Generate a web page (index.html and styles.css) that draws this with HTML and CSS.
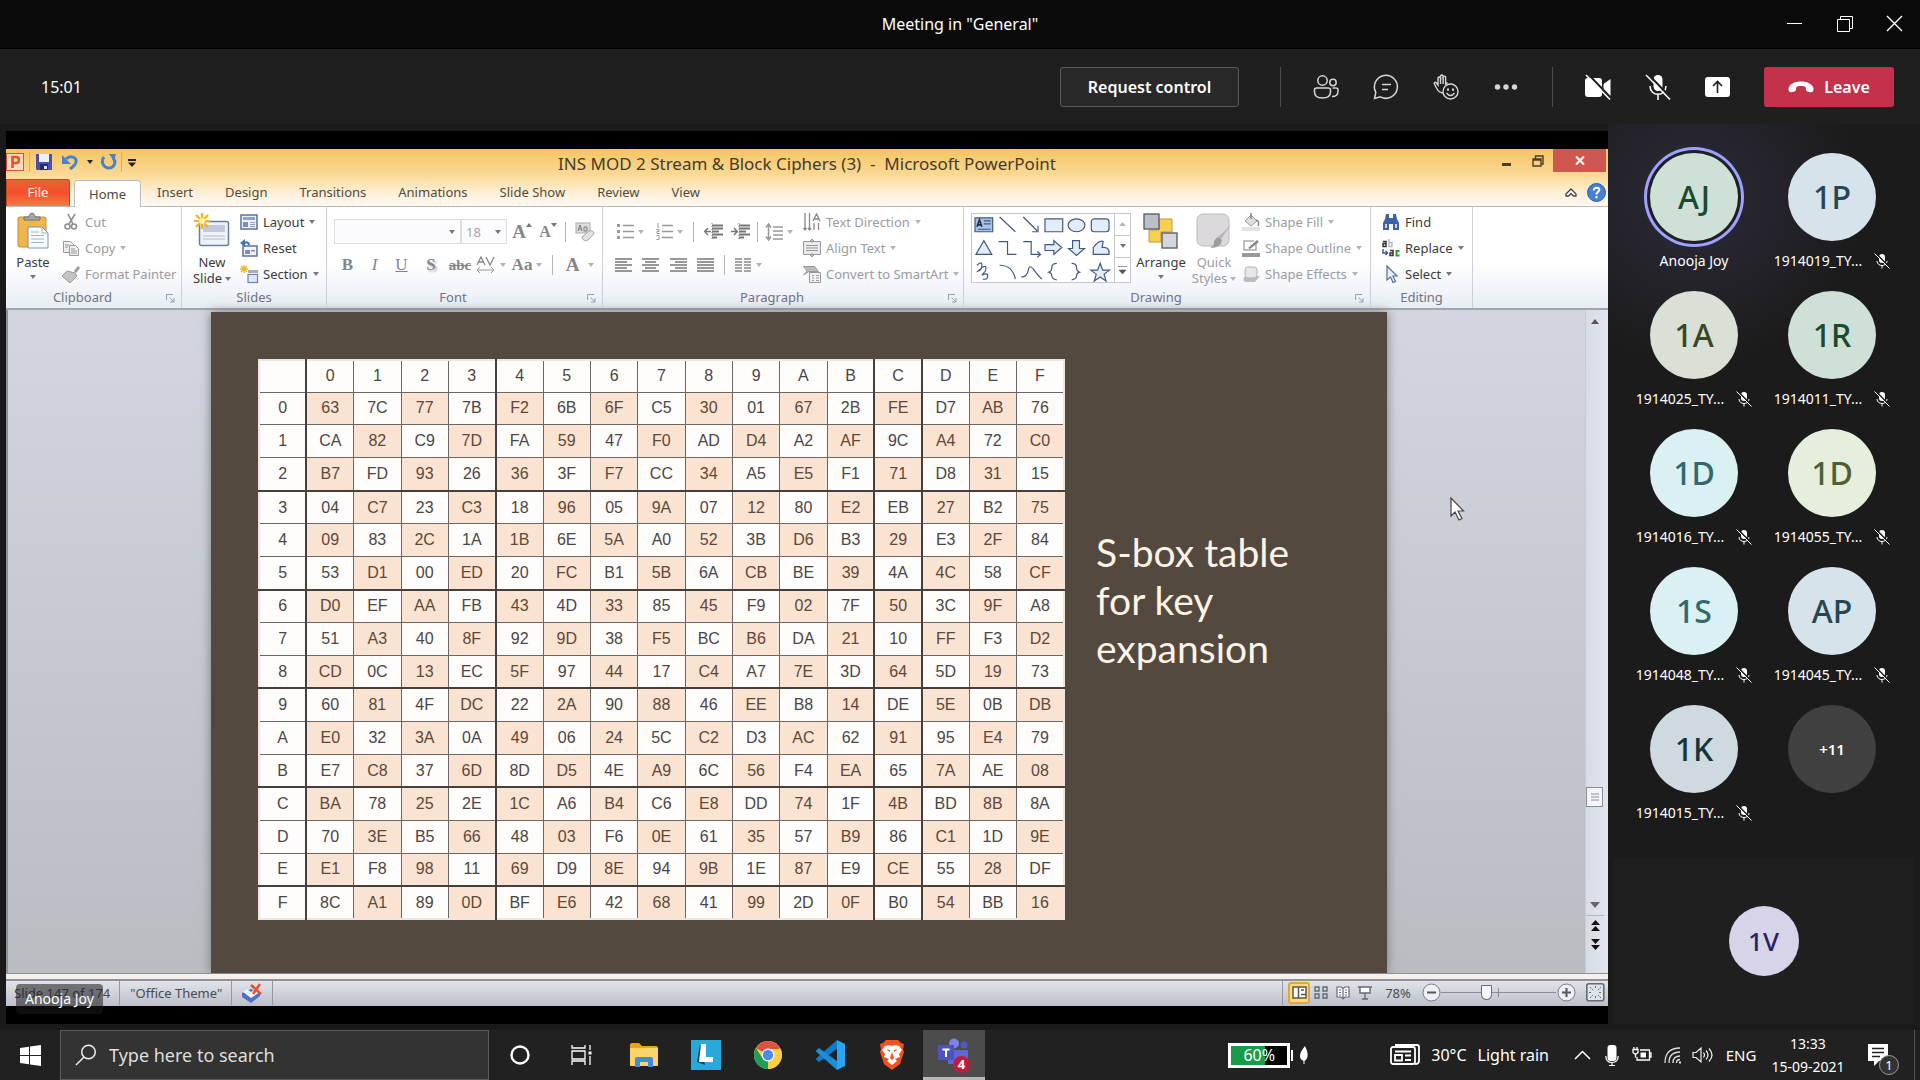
FILE: index.html
```html
<!DOCTYPE html>
<html lang="en">
<head>
<meta charset="utf-8">
<title>Meeting in "General"</title>
<link rel="stylesheet" href="styles.css">
</head>
<body>
<svg class="sprite" aria-hidden="true">
  <symbol id="mic-off" viewBox="0 0 16 16"><rect x="5" y="1" width="6" height="9" rx="3" fill="#fff"/><path d="M3 8c0 6 10 6 10 0M8 12.500v3" fill="none" stroke="#fff"/><path d="M2 .5l14 14" stroke="#1b1b1b" stroke-width="1.500"/><path d="M.5 .5l15 15" stroke="#fff"/></symbol>
  <symbol id="down" viewBox="0 0 6 4"><path d="M0 0h6L3 4z" fill="currentColor"/></symbol>
  <symbol id="launch" viewBox="0 0 9 9"><path d="M.5 6V.5H7M3.500 3.500l4 4M8 4v4H4" fill="none" stroke="#9a9da5"/></symbol>
</svg>

<header class="titlebar">
  <span></span>
  <h1>Meeting in "General"</h1>
  <div class="window-buttons">
    <button aria-label="Minimize"><svg width="18" height="18"><path d="M1 8.500h15" stroke="#fff"/></svg></button>
    <button aria-label="Restore"><svg width="18" height="18" fill="none" stroke="#fff"><path d="M1.500 4.500h12v12h-12zM4.500 4.500v-3h12v12h-3"/></svg></button>
    <button aria-label="Close"><svg width="18" height="18"><path d="M1 1l15 15M16 1L1 16" stroke="#fff" stroke-width="1.400"/></svg></button>
  </div>
</header>

<div class="callbar">
  <time class="elapsed">15:01</time>
  <button class="request">Request control</button>
  <div class="call-group">
    <button aria-label="People"><svg width="26" height="26" fill="none" stroke="#d6d6d6" stroke-width="1.500"><circle cx="9.500" cy="6.500" r="4.700"/><circle cx="20" cy="8.500" r="3.200"/><path d="M3.500 14h12q2 0 2 2v2q0 6-8 6t-8-6v-2q0-2 2-2zM19.500 14h3.500q2 0 2 2v1.500q0 5-6 5"/></svg></button>
    <button aria-label="Chat"><svg width="26" height="26" fill="none" stroke="#d6d6d6" stroke-width="1.500"><path d="M1.500 24.500l1.300-6.200a11.500 11.500 0 1 1 4.600 4.600z"/><path d="M9 10.500h9M9 15.500h6"/></svg></button>
    <button aria-label="Reactions"><svg width="26" height="26" fill="none" stroke="#d6d6d6" stroke-width="1.400"><path d="M10 19c-3 0-5-2-6.500-5L1.300 9.800c-.5-1.500 1.300-2 2-.8L5 11V4q1.300-2 2.500 0V2q1.300-2 2.600 0v1q1.300-1.700 2.500 0v7l2-1.500" /><path d="M7.500 4v6M10.100 3v7"/><circle cx="17.500" cy="17.500" r="7.500"/><path d="M13.500 19q4 5 8 0"/><path d="M15 14.500v2.200M20 14.500v2.200" stroke-width="2"/></svg></button>
    <button aria-label="More"><svg width="24" height="24" fill="#d6d6d6"><circle cx="3.500" cy="12" r="2.700"/><circle cx="12" cy="12" r="2.700"/><circle cx="20.500" cy="12" r="2.700"/></svg></button>
  </div>
  <div class="call-group">
    <button aria-label="Turn camera on"><svg width="26" height="26"><rect x="0" y="4" width="17" height="19" rx="3" fill="#fff"/><path d="M18.500 10l7-5v17l-7-5z" fill="#fff"/><path d="M3 0l24 25" stroke="#1f1f1f" stroke-width="2"/><path d="M1 1l24 24.500" stroke="#fff" stroke-width="1.500"/></svg></button>
    <button aria-label="Unmute"><svg width="26" height="26"><rect x="8.500" y="1" width="9" height="16" rx="4.500" fill="#fff"/><path d="M5 12c0 11 16 11 16 0M13 20v6" fill="none" stroke="#fff" stroke-width="1.500"/><path d="M3 0l24 25" stroke="#1f1f1f" stroke-width="2"/><path d="M1 1l24 24.500" stroke="#fff" stroke-width="1.500"/></svg></button>
    <button aria-label="Share content"><svg width="26" height="26"><rect x="0" y="3" width="25" height="20" rx="3" fill="#fff"/><path d="M12.500 19V8M8 12l4.500-4.500L17 12" fill="none" stroke="#1f1f1f" stroke-width="1.600"/></svg></button>
  </div>
  <button class="leave"><svg width="26" height="12"><path d="M.5 8C1-2 25-2 25.500 8c0 3-1.500 3.500-3 3.200l-3-.7c-2-.5-1.300-3.500-2-4.500-2-1.200-7-1.200-9 0-.7 1 0 4-2 4.500l-3 .7C2 11.500.5 11 .5 8z" fill="#fff"/></svg>Leave</button>
</div>

<main class="meeting">
  <section class="stage" aria-label="Shared screen">
    <div class="ppt">
      <div class="ppt-head">
        <div class="ppt-title">
          <div class="qat">
            <svg width="18" height="18"><rect x=".5" y=".5" width="17" height="17" fill="#fbd9c8" stroke="#d9532c"/><path d="M6.500 15V4h3.500q3 0 3 3t-3 3H6.500" fill="none" stroke="#dc5a1c" stroke-width="2.600"/></svg>
            <i class="vline"></i>
            <button aria-label="Save"><svg width="18" height="18"><path d="M1 1h16v16H2l-1-1z" fill="#4a4fb0"/><path d="M4 1h10v8H4z" fill="#eef1fb"/><path d="M5 11h8v6H5z" fill="#262c6b"/><path d="M9 13h3v3H9z" fill="#dfe3f5"/></svg></button>
            <button aria-label="Undo"><svg width="18" height="18"><path d="M5 6c4-4 11-2 10 3-.5 3-3 5-6 7" fill="none" stroke="#4b80cc" stroke-width="3"/><path d="M1 2v9h9z" fill="#4b80cc"/></svg></button>
            <svg class="arrow dark"><use href="#down"/></svg>
            <button class="redo" aria-label="Repeat"><svg width="15" height="16"><path d="M3 3c-4 5 0 11 5 11s8-6 4-10" fill="none" stroke="#4b80cc" stroke-width="3"/><path d="M8 0h7l-2 7z" fill="#4b80cc"/></svg></button>
            <i class="vline"></i>
            <button aria-label="Customize toolbar"><svg width="10" height="9"><path d="M1 1h8v2H1zM1 4.500h8L5 9z" fill="#222"/></svg></button>
          </div>
          <h2>INS MOD 2 Stream &amp; Block Ciphers (3) &nbsp;- &nbsp;Microsoft PowerPoint</h2>
          <div class="ppt-controls">
            <button aria-label="Minimize"><svg width="12" height="12"><path d="M1 9.500h9" stroke="#4c3f25" stroke-width="3"/></svg></button>
            <button aria-label="Restore"><svg width="12" height="12" fill="none" stroke="#4c3f25" stroke-width="1.400"><path d="M1 4h8v7H1zM1 5h8M3.500 4V1H11v8H9"/></svg></button>
            <button class="ppt-close" aria-label="Close"><svg width="10" height="9"><path d="M1 .5l8 8M9 .5l-8 8" stroke="#fff" stroke-width="2"/></svg></button>
          </div>
        </div>
        <nav class="tabs">
          <button class="tab file">File</button><button class="tab on">Home</button><button class="tab">Insert</button><button class="tab">Design</button><button class="tab">Transitions</button><button class="tab">Animations</button><button class="tab">Slide Show</button><button class="tab">Review</button><button class="tab">View</button>
          <span class="tabs-end">
            <button aria-label="Collapse ribbon"><svg width="12" height="10" fill="#fff" stroke="#444" stroke-width="1.300"><path d="M1 6l5-5 5 5v2H8.500L6 5.500 3.500 8H1z"/></svg></button>
            <button aria-label="Help"><svg width="19" height="19"><circle cx="9.500" cy="9.500" r="9" fill="#4580d2" stroke="#2c5fae"/><path d="M6.800 7.500c0-4 6-3.500 5.500-.3-.3 1.800-2.800 1.800-2.800 4.300M9.500 13v2.200" fill="none" stroke="#fff" stroke-width="2"/></svg></button>
          </span>
        </nav>
      </div>

      <div class="ribbon">
        <section class="group clipboard">
          <div class="body">
            <button class="big paste"><svg width="32" height="36"><rect x="1" y="4" width="28" height="30" rx="2" fill="#f0b64e" stroke="#c48f33"/><path d="M7 7V4h5c0-5 6-5 6 0h5v3z" fill="#a6a8ab" stroke="#6e7073"/><path d="M11 14h14l6 6v15H11z" fill="#f8faff" stroke="#7f8fb0"/><path d="M25 14v6h6M14 19h8M14 22.500h13M14 26h13M14 29.500h13" fill="none" stroke="#a8b2c6"/></svg><span>Paste</span><svg class="arrow"><use href="#down"/></svg></button>
            <div class="stack off">
              <button><svg width="18" height="18" fill="none" stroke="#8d8d92" stroke-width="1.600"><path d="M6 1l5 10M13 1L7 11"/><circle cx="5.500" cy="13.500" r="2.500"/><circle cx="12" cy="13.500" r="2.500"/></svg>Cut</button>
              <button><svg width="18" height="18" fill="#eee" stroke="#999"><path d="M1.500 2.500h7l3 3v8h-10z"/><path d="M7.500 6.500h6l3 3v7h-9z"/><path d="M9 10h4M9 12h6M9 14h6M3 6h4M3 8h3"/></svg>Copy<svg class="arrow"><use href="#down"/></svg></button>
              <button><svg width="18" height="18"><path d="M12 6l4-5 2 2-4 5z" fill="#999"/><path d="M5 6l8 2 2 3-7 7-8-7z" fill="#c6c3c3" stroke="#999"/></svg>Format Painter</button>
            </div>
          </div>
          <h3>Clipboard</h3><svg class="launch"><use href="#launch"/></svg>
        </section>
        <section class="group slides">
          <div class="body">
            <button class="big"><svg width="36" height="36"><rect x="5.500" y="8.500" width="29" height="24" rx="2" fill="#eef2fa" stroke="#6a7d9e" stroke-width="1.500"/><path d="M9 12h22v7H9z" fill="#c4c9d9"/><path d="M9 23h22M9 26h22" stroke="#b5bccd"/><path d="M8 0v16M0 8h16M2 2l12 12M14 2L2 14" stroke="#f2b522" stroke-width="2.200"/><circle cx="8" cy="8" r="3" fill="#fff2a8"/></svg><span>New</span><span>Slide <svg class="arrow"><use href="#down"/></svg></span></button>
            <div class="stack">
              <button><svg width="18" height="18"><rect x="1" y="2" width="16" height="14" fill="#eef3fb" stroke="#5b7199" stroke-width="1.500"/><path d="M3 4h12v3H3z" fill="#8aa3cc"/><path d="M3 9h5v5H3z" fill="#7b8fb5"/><path d="M10 9.500h5M10 11.500h5M10 13.500h5" stroke="#8da0c0"/></svg>Layout<svg class="arrow"><use href="#down"/></svg></button>
              <button><svg width="18" height="18"><rect x="3" y="7" width="14" height="10" fill="#eef3fb" stroke="#5b7199" stroke-width="1.500"/><path d="M5 11h5v4H5zM11 11h4v1.500h-4z" fill="#7b8fb5"/><path d="M9 6c0-3-3-3-5-2" fill="none" stroke="#3f74c4" stroke-width="2.200"/><path d="M0 4l5-4v8z" fill="#3f74c4"/></svg>Reset</button>
              <button><svg width="18" height="18"><path d="M8 5h10v3H8z" fill="#a9acb3"/><rect x="8" y="9.500" width="9.500" height="8" fill="#dfe8f7" stroke="#6f84aa" stroke-width="1.200"/><path d="M4 0v8M0 4h8M1 1l6 6M7 1L1 7" stroke="#f2b522" stroke-width="1.300"/></svg>Section<svg class="arrow"><use href="#down"/></svg></button>
            </div>
          </div>
          <h3>Slides</h3>
        </section>
        <section class="group font">
          <div class="body rows off">
            <div class="font-row1">
              <select aria-label="Font"><option></option></select>
              <select aria-label="Font size"><option>18</option></select>
              <button class="serif grow" aria-label="Grow font">A<svg width="6" height="5"><path d="M3 0l3 4H0z" fill="#777"/></svg></button>
              <button class="serif shrink" aria-label="Shrink font">A<svg width="6" height="5"><path d="M0 0h6L3 4z" fill="#777"/></svg></button>
              <i class="vline"></i>
              <button aria-label="Clear formatting"><svg width="20" height="20"><rect x="1" y="1" width="14" height="10" fill="#ddd" stroke="#aaa"/><path d="M3 9l2-6 2 6M4 7h2M9 9V5h3v4z" fill="none" stroke="#777"/><path d="M7 15l7-6q5-1 5 3l-6 6q-5 2-6-3z" fill="#e4dfe0" stroke="#a9a6a8"/></svg></button>
            </div>
            <div class="font-row2">
              <button class="serif"><b>B</b></button><button class="serif"><em>I</em></button><button class="serif"><u>U</u></button><button class="serif shadow"><b>S</b></button><button class="serif"><s>abc</s></button>
              <button class="av" aria-label="Character spacing"><svg width="20" height="18"><path d="M1 9l4-8 4 8M3 6h4M10 1l4 8 4-8" fill="none" stroke="#888" stroke-width="1.300"/><path d="M1 14h17M4 11l-3 3 3 3M15 11l3 3-3 3" fill="none" stroke="#999"/></svg><svg class="arrow"><use href="#down"/></svg></button>
              <button class="serif"><b>Aa</b><svg class="arrow"><use href="#down"/></svg></button><i class="vline"></i><button class="serif color"><b>A</b><svg class="arrow"><use href="#down"/></svg></button>
            </div>
          </div>
          <h3>Font</h3><svg class="launch"><use href="#launch"/></svg>
        </section>
        <section class="group paragraph">
          <div class="body">
            <div class="rows off">
              <div class="para-row1">
                <button aria-label="Bullets"><svg width="17" height="17" stroke="#999" stroke-width="1.500"><path d="M6 2.500h11M6 8.500h11M6 14.500h11"/><path d="M0 2.500h3M0 8.500h3M0 14.500h3" stroke-width="3"/></svg><svg class="arrow"><use href="#down"/></svg></button>
                <button aria-label="Numbering"><svg width="17" height="17" fill="none" stroke="#999" stroke-width="1.500"><path d="M6 2.500h11M6 8.500h11M6 14.500h11"/><path d="M2 0v5M.5 6.500h2.500v2H1v2h2.500M.5 12.500h2.500v4H.5" stroke-width="1"/></svg><svg class="arrow"><use href="#down"/></svg></button>
                <i class="vline"></i>
                <button aria-label="Decrease indent"><svg width="19" height="17" stroke="#777" stroke-width="2"><path d="M8 2.500h11M8 5.500h11M8 8.500h7M8 11.500h11M8 14.500h5"/><path d="M0 8.500h7M4 5L.8 8.500 4 12" fill="none" stroke-width="1.500"/><path d="M8 0v17" stroke-dasharray="1 2" stroke-width="1"/></svg></button>
                <button aria-label="Increase indent"><svg width="19" height="17" stroke="#777" stroke-width="2"><path d="M8 2.500h11M8 5.500h11M8 8.500h7M8 11.500h11M8 14.500h5"/><path d="M0 8.500h7M3 5l3.200 3.500L3 12" fill="none" stroke-width="1.500"/><path d="M8 0v17" stroke-dasharray="1 2" stroke-width="1"/></svg></button>
                <i class="vline"></i>
                <button aria-label="Line spacing"><svg width="18" height="18" stroke="#999" stroke-width="1.500"><path d="M8 4h10M8 8h10M8 12h10M8 16h10M3.500 2v14M1 4.500L3.500 1 6 4.500M1 13.500L3.500 17 6 13.500" fill="none"/></svg><svg class="arrow"><use href="#down"/></svg></button>
              </div>
              <div class="para-row2">
                <button aria-label="Align left"><svg width="17" height="14" stroke="#777" stroke-width="1.600"><path d="M0 1h17M0 4h12M0 7h17M0 10h12M0 13h17"/></svg></button>
                <button aria-label="Center"><svg width="17" height="14" stroke="#777" stroke-width="1.600"><path d="M0 1h17M3 4h11M0 7h17M3 10h11M0 13h17"/></svg></button>
                <button aria-label="Align right"><svg width="17" height="14" stroke="#777" stroke-width="1.600"><path d="M0 1h17M5 4h12M0 7h17M5 10h12M0 13h17"/></svg></button>
                <button aria-label="Justify"><svg width="17" height="14" stroke="#777" stroke-width="1.600"><path d="M0 1h17M0 4h17M0 7h17M0 10h17M0 13h17"/></svg></button>
                <i class="vline"></i>
                <button aria-label="Columns"><svg width="17" height="14" stroke="#888" stroke-width="1.600"><path d="M0 1h7M9 1h7M0 4h7M9 4h7M0 7h7M9 7h7M0 10h7M9 10h7M0 13h7M9 13h7"/></svg><svg class="arrow"><use href="#down"/></svg></button>
              </div>
            </div>
            <div class="stack off">
              <button><svg width="18" height="18" fill="none" stroke="#888" stroke-width="1.300"><path d="M2 0v17M6.500 0v17M11 10v7M15.500 10v7M10 8l3.500-7L17 8M11 6h5M.5 15L2 17l1.500-2M5 15l1.500 2L8 15"/></svg>Text Direction<svg class="arrow"><use href="#down"/></svg></button>
              <button><svg width="18" height="18" fill="#eceaec" stroke="#999"><path d="M.5 2.500h17v13H.5z"/><path d="M3 6.500h12M3 9h12M3 11.500h12M9 0v4M7 2l2-2 2 2M9 14v4M7 16l2 2 2-2"/></svg>Align Text<svg class="arrow"><use href="#down"/></svg></button>
              <button><svg width="18" height="18" stroke="#999"><path d="M.5 1.500h11l4 5H6L.5 10 4 6z" fill="#bbb"/><path d="M6.500 7.500h11v10h-11z" fill="#f2f0f2"/><path d="M9 10.500h2M13 10.500h3M9 13h2M13 13h3M9 15.500h2M13 15.500h3"/></svg>Convert to SmartArt<svg class="arrow"><use href="#down"/></svg></button>
            </div>
          </div>
          <h3>Paragraph</h3><svg class="launch"><use href="#launch"/></svg>
        </section>
        <section class="group drawing">
          <div class="body">
            <div class="gallery">
              <svg viewBox="0 0 144 70" fill="#e3edf8" stroke="#41597f" stroke-width="1.200">
                <path d="M3 4h18v14H3z" fill="#a9c2e6"/><path d="M5 13l2.500-7 2.500 7M6 11h3" fill="none" stroke="#1e2c47" stroke-width="1.600"/><path d="M12 7h7M12 10h7M6 15.500h13" fill="none"/>
                <path d="M28 3l16 15M52 3l14 14M67 12v6h-6" fill="none"/>
                <path d="M74 5h18v13H74z"/><ellipse cx="106" cy="11.500" rx="8.500" ry="6.500"/><rect x="121" y="5" width="18" height="13" rx="3"/>
                <path d="M12 27l8 14H4z"/><path d="M27 28h9v13h9M52 28h8v13h9M66 38l3.500 3L66 44" fill="none"/>
                <path d="M74 31h9v-4l8 7-8 7v-4h-9zM102 27h7v8h5l-8 7-8-7h4z"/><path d="M123 41v-7q6-8 10-6l-1 6q8-1 7 7z"/>
                <path d="M5 52q5-5 5 0t-4 6q7-7 8-4t-4 8q6-3 6 1t-5 3" fill="none"/>
                <path d="M28 52q13 0 16 14M50 64q6 0 7-7t6 0 8 9" fill="none"/>
                <path d="M86 50q-5 0-5 4t-3 5q3 1 3 4t5 4M101 50q5 0 5 4t3 5q-3 1-3 4t-5 4" fill="none"/>
                <path d="M130 50l2.500 7h7l-5.500 4 2 7-6-4-6 4 2-7-5.500-4h7z"/>
              </svg>
              <div class="gallery-scroll"><button aria-label="Row up"><svg width="7" height="5"><path d="M3.500 0L7 4H0z" fill="#b9b9bd"/></svg></button><button aria-label="Row down"><svg class="arrow"><use href="#down"/></svg></button><button aria-label="More shapes"><svg width="9" height="8"><path d="M0 .5h9M1 4h7L4.500 8z" fill="#555" stroke="#555" stroke-width=".6"/></svg></button></div>
            </div>
            <button class="big arrange"><svg width="36" height="36"><path d="M6.500 18h22M17 5.500h12v18H6.500v10H24V16" fill="none"/><path d="M16 6h13v13H18v10H6V17h10z" fill="#f8cf55" stroke="#c29a34"/><rect x="1" y="1" width="15" height="15" fill="#bcc0c6" stroke="#5d6167" stroke-width="1.400"/><rect x="19" y="20" width="15" height="15" fill="#d3d6db" stroke="#5d6167" stroke-width="1.400"/></svg><span>Arrange</span><svg class="arrow"><use href="#down"/></svg></button>
            <button class="big quick off"><svg width="36" height="36"><rect x="1" y="1" width="32" height="32" rx="6" fill="#dcd8dc" stroke="#bbb7bb"/><path d="M35 12L25 26l-3-2z" fill="#b5b5b5"/><path d="M22 24l4 3q-1 8-12 8 5-3 4-7 2-3 4-4z" fill="#9d9d9f"/></svg><span>Quick</span><span>Styles <svg class="arrow"><use href="#down"/></svg></span></button>
            <div class="stack off">
              <button><svg width="18" height="18"><path d="M3 8l6-6 6 6-6 5z" fill="#ddd" stroke="#999"/><path d="M9 6V0M14 7q4 1 2 6" fill="none" stroke="#888" stroke-width="1.500"/><path d="M0 14h18v4H0z" fill="#e3e3e3"/></svg>Shape Fill<svg class="arrow"><use href="#down"/></svg></button>
              <button><svg width="18" height="18"><path d="M14 4v7H2V2h10" fill="none" stroke="#aaa" stroke-width="1.500"/><path d="M6 9l9-8 2 2-9 7z" fill="#888"/><path d="M0 14h18v4H0z" fill="#999"/></svg>Shape Outline<svg class="arrow"><use href="#down"/></svg></button>
              <button><svg width="18" height="18"><path d="M2 12q-2 5 3 5h8l5-6z" fill="#bdbdbf"/><rect x="3" y="2" width="12" height="11" rx="3" fill="#e8e5e8" stroke="#b5b2b5"/></svg>Shape Effects<svg class="arrow"><use href="#down"/></svg></button>
            </div>
          </div>
          <h3>Drawing</h3><svg class="launch"><use href="#launch"/></svg>
        </section>
        <section class="group editing">
          <div class="body">
            <div class="stack">
              <button><svg width="18" height="18" fill="#3e62a8"><path d="M4 1h3v4h4V1h3l1 5 2 4v7h-6v-6H7v6H1v-7l2-4z"/><path d="M3 11h2v4H3zM13 11h2v4h-2z" fill="#c5d5f2"/></svg>Find</button>
              <button><svg width="18" height="18" fill="none" stroke-width="1.500"><path d="M1 2.500h3v5H1v-3h3" stroke="#333"/><path d="M7 0v7.500h3v-4H7" stroke="#bbb"/><path d="M1 10v4h4M3.500 12l2 2-2 2" stroke="#3c5c9a"/><path d="M8 11.500h3v5H8v-2.500h3" stroke="#333"/><path d="M17.500 12h-3v4.500h3" stroke="#2f9a3a" stroke-width="2"/></svg>Replace<svg class="arrow"><use href="#down"/></svg></button>
              <button><svg width="18" height="18"><path d="M5 1v14l3.500-3 2.500 5.500 2.500-1-2.500-5.500h4z" fill="#e6eefb" stroke="#566f9b" stroke-width="1.200"/></svg>Select<svg class="arrow"><use href="#down"/></svg></button>
            </div>
          </div>
          <h3>Editing</h3>
        </section>
      </div>

      <div class="workspace">
        <article class="slide">
          <table class="sbox">
            <thead><tr><td><th>0<th>1<th>2<th>3<th>4<th>5<th>6<th>7<th>8<th>9<th>A<th>B<th>C<th>D<th>E<th>F</thead>
            <tbody>
            <tr><th>0<td>63<td>7C<td>77<td>7B<td>F2<td>6B<td>6F<td>C5<td>30<td>01<td>67<td>2B<td>FE<td>D7<td>AB<td>76
            <tr><th>1<td>CA<td>82<td>C9<td>7D<td>FA<td>59<td>47<td>F0<td>AD<td>D4<td>A2<td>AF<td>9C<td>A4<td>72<td>C0
            <tr><th>2<td>B7<td>FD<td>93<td>26<td>36<td>3F<td>F7<td>CC<td>34<td>A5<td>E5<td>F1<td>71<td>D8<td>31<td>15
            <tr><th>3<td>04<td>C7<td>23<td>C3<td>18<td>96<td>05<td>9A<td>07<td>12<td>80<td>E2<td>EB<td>27<td>B2<td>75
            <tr><th>4<td>09<td>83<td>2C<td>1A<td>1B<td>6E<td>5A<td>A0<td>52<td>3B<td>D6<td>B3<td>29<td>E3<td>2F<td>84
            <tr><th>5<td>53<td>D1<td>00<td>ED<td>20<td>FC<td>B1<td>5B<td>6A<td>CB<td>BE<td>39<td>4A<td>4C<td>58<td>CF
            <tr><th>6<td>D0<td>EF<td>AA<td>FB<td>43<td>4D<td>33<td>85<td>45<td>F9<td>02<td>7F<td>50<td>3C<td>9F<td>A8
            <tr><th>7<td>51<td>A3<td>40<td>8F<td>92<td>9D<td>38<td>F5<td>BC<td>B6<td>DA<td>21<td>10<td>FF<td>F3<td>D2
            <tr><th>8<td>CD<td>0C<td>13<td>EC<td>5F<td>97<td>44<td>17<td>C4<td>A7<td>7E<td>3D<td>64<td>5D<td>19<td>73
            <tr><th>9<td>60<td>81<td>4F<td>DC<td>22<td>2A<td>90<td>88<td>46<td>EE<td>B8<td>14<td>DE<td>5E<td>0B<td>DB
            <tr><th>A<td>E0<td>32<td>3A<td>0A<td>49<td>06<td>24<td>5C<td>C2<td>D3<td>AC<td>62<td>91<td>95<td>E4<td>79
            <tr><th>B<td>E7<td>C8<td>37<td>6D<td>8D<td>D5<td>4E<td>A9<td>6C<td>56<td>F4<td>EA<td>65<td>7A<td>AE<td>08
            <tr><th>C<td>BA<td>78<td>25<td>2E<td>1C<td>A6<td>B4<td>C6<td>E8<td>DD<td>74<td>1F<td>4B<td>BD<td>8B<td>8A
            <tr><th>D<td>70<td>3E<td>B5<td>66<td>48<td>03<td>F6<td>0E<td>61<td>35<td>57<td>B9<td>86<td>C1<td>1D<td>9E
            <tr><th>E<td>E1<td>F8<td>98<td>11<td>69<td>D9<td>8E<td>94<td>9B<td>1E<td>87<td>E9<td>CE<td>55<td>28<td>DF
            <tr><th>F<td>8C<td>A1<td>89<td>0D<td>BF<td>E6<td>42<td>68<td>41<td>99<td>2D<td>0F<td>B0<td>54<td>BB<td>16
            </tbody>
          </table>
          <p class="slide-title">S-box table<br>for key<br>expansion</p>
        </article>
        <div class="scrollbar">
          <button aria-label="Scroll up"><svg width="8" height="5"><path d="M4 0l4 5H0z" fill="#555"/></svg></button>
          <span class="before"></span>
          <span class="thumb"><svg width="8" height="9"><path d="M0 1h8M0 4h8M0 7h8" stroke="#8a8d96"/></svg></span>
          <span class="after"></span>
          <button aria-label="Scroll down"><svg width="10" height="6"><path d="M0 0h10L5 6z" fill="#666"/></svg></button>
          <button class="prev" aria-label="Previous slide"><svg width="9" height="12"><path d="M4.500 0L9 5H0zM4.500 6L9 11H0z" fill="#111"/></svg></button>
          <button aria-label="Next slide"><svg width="9" height="12"><path d="M4.500 5L9 0H0zM4.500 11L9 6H0z" fill="#111"/></svg></button>
        </div>
      </div>

      <footer class="statusbar">
        <span class="cell first">Slide 147 of 174</span>
        <span class="cell">"Office Theme"</span>
        <span class="cell"><svg width="21" height="20"><path d="M0 10l9-4 9 4v3l-9 7-9-6z" fill="#4f72c0"/><path d="M1 9l4-3 4 3 4-3 5 3-9 6z" fill="#eef2fb"/><path d="M9 2l10 9M18 1l-7 10" stroke="#e8532f" stroke-width="2.600"/></svg></span>
        <div class="views">
          <button class="on" aria-label="Normal"><svg width="15" height="13" fill="#fff" stroke="#5b564a" stroke-width="1.500"><path d="M1 1h13v11H1zM6.500 1v11M9 4h3M9 8.500h5"/></svg></button>
          <button aria-label="Slide sorter"><svg width="14" height="13" fill="none" stroke="#666a73" stroke-width="1.400"><path d="M1 1h4v4H1zM9 1h4v4H9zM1 8h4v4H1zM9 8h4v4H9z"/></svg></button>
          <button aria-label="Reading view"><svg width="14" height="14" fill="#fff" stroke="#666a73" stroke-width="1.200"><path d="M1 1h4l2 1.500L9 1h4v10H9l-2 2-2-2H1zM7 2.500V13M3 4h2M3 6.500h2M3 9h2M9 4h2M9 6.500h2M9 9h2"/></svg></button>
          <button aria-label="Slide show"><svg width="14" height="14" fill="#fff" stroke="#666a73" stroke-width="1.400"><path d="M0 1h14M2 1v6h10V1M7 7v6M4 13h6"/></svg></button>
          <output class="percent">78%</output>
          <button aria-label="Zoom out"><svg width="19" height="19" fill="#eceff4" stroke="#777b84"><circle cx="9.500" cy="9.500" r="8.500"/><path d="M5 9.500h9" stroke="#555" stroke-width="2"/></svg></button>
          <input class="zoom" type="range" min="0" max="100" value="38" aria-label="Zoom">
          <button aria-label="Zoom in"><svg width="19" height="19" fill="#eceff4" stroke="#777b84"><circle cx="9.500" cy="9.500" r="8.500"/><path d="M5 9.500h9M9.500 5v9" stroke="#555" stroke-width="2"/></svg></button>
          <button class="fit" aria-label="Fit slide"><svg width="19" height="19" fill="#dfe2e7" stroke="#666a73"><rect x=".8" y=".8" width="17" height="17" rx="2" stroke-width="1.600"/><path d="M9.500 3v3M9.500 13v3M3 9.500h3M13 9.500h3M4 4l3 3M15 4l-3 3M4 15l3-3M15 15l-3-3" stroke-dasharray="2 1"/></svg></button>
        </div>
      </footer>
    </div>
    <svg class="pointer" width="14" height="24"><path d="M1 1v18l4-4 4 8 3-1.500-4-7.500h5.500z" fill="#fff" stroke="#444" stroke-width="1.200"/></svg>
    <span class="presenter">Anooja Joy</span>
  </section>

  <aside class="roster">
    <ul class="people">
      <li class="speaking"><span class="avatar green">AJ</span><span class="name">Anooja Joy</span></li>
      <li><span class="avatar slate">1P</span><span class="name">1914019_TY...<svg><use href="#mic-off"/></svg></span></li>
      <li><span class="avatar moss">1A</span><span class="name">1914025_TY...<svg><use href="#mic-off"/></svg></span></li>
      <li><span class="avatar green">1R</span><span class="name">1914011_TY...<svg><use href="#mic-off"/></svg></span></li>
      <li><span class="avatar aqua">1D</span><span class="name">1914016_TY...<svg><use href="#mic-off"/></svg></span></li>
      <li><span class="avatar lime">1D</span><span class="name">1914055_TY...<svg><use href="#mic-off"/></svg></span></li>
      <li><span class="avatar aqua">1S</span><span class="name">1914048_TY...<svg><use href="#mic-off"/></svg></span></li>
      <li><span class="avatar slate">AP</span><span class="name">1914045_TY...<svg><use href="#mic-off"/></svg></span></li>
      <li><span class="avatar steel">1K</span><span class="name">1914015_TY...<svg><use href="#mic-off"/></svg></span></li>
      <li><button class="avatar more">+11</button></li>
    </ul>
    <div class="self"><span class="avatar violet">1V</span></div>
  </aside>
</main>

<footer class="taskbar">
  <button class="start" aria-label="Start"><svg width="21" height="21" fill="#fff"><path d="M0 3l9-1.300V10H0zM10 1.500L21 0v10H10zM0 11h9v8.300L0 18zM10 11h11v10l-11-1.500z"/></svg></button>
  <label class="search"><svg width="22" height="22" fill="none" stroke="#eee" stroke-width="1.500"><circle cx="13.500" cy="8" r="6.800"/><path d="M9 13l-8 8"/></svg><input type="text" placeholder="Type here to search"></label>
  <nav class="apps">
    <button aria-label="Cortana"><svg width="20" height="20"><circle cx="10" cy="10" r="8.500" fill="none" stroke="#fff" stroke-width="2.400"/></svg></button>
    <button aria-label="Task view"><svg width="22" height="20" fill="none" stroke="#fff" stroke-width="1.300"><path d="M1 0v3h13V0M1 6h13v8H1zM1 20v-4h13v4M19 0v5M19 11v9"/><path d="M17.500 6.500h3v3h-3z" fill="#fff" stroke="none"/></svg></button>
    <button aria-label="File Explorer"><svg width="28" height="24"><path d="M0 2q0-2 2-2h7l3 3h14q2 0 2 2v16H0z" fill="#e8a317"/><path d="M0 5h28v17q0 1-1 1H1q-1 0-1-1z" fill="#fdd467"/><path d="M5 24v-8q0-2 2-2h14q2 0 2 2v8h-5v-5h-8v5z" fill="#3a8fd8"/></svg></button>
    <button aria-label="L"><svg width="30" height="30"><path d="M0 0h30v30H0z" fill="#28a9d8"/><path d="M9 4l-3 18 8 3-1-4z" fill="#12417a"/><path d="M10 4h5v13h7v5H8z" fill="#fff"/></svg></button>
    <button aria-label="Chrome"><svg width="28" height="28"><circle cx="14" cy="14" r="14" fill="#fbcf3f"/><path d="M14 14L1.900 7A14 14 0 0 1 26.100 7z" fill="#dd5144"/><path d="M14 14v14A14 14 0 0 1 1.900 7l6.500 10z" fill="#1e9e5a"/><path d="M14 14l6 3-6 11A14 14 0 0 0 26.500 8H14z" fill="#fbcf3f"/><circle cx="14" cy="14" r="6.500" fill="#fff"/><circle cx="14" cy="14" r="5.200" fill="#4a8af4"/></svg></button>
    <button aria-label="Visual Studio Code"><svg width="30" height="30"><path d="M22 0l8 4v22l-8 4z" fill="#2aa5f2"/><path d="M22 0v9L4 22l-3.500-3z" fill="#0f7bc4"/><path d="M22 30v-9L4 8 .5 11z" fill="#1a8ed8"/></svg></button>
    <button aria-label="Brave"><svg width="26" height="30"><path d="M7 0h12l3 3 3 1-1 5 1 3-4 12-8 6-8-6L1 12l1-3-1-5 3-1z" fill="#f4511e"/><path d="M6 6l4-1 3 1 3-1 4 1 3 4-3 4 1 3-5 2 2 2-5 4-5-4 2-2-5-2 1-3-3-4z" fill="#fff"/><path d="M7 9l4 1v2zM19 9l-4 1v2zM13 12l2 6-2 2-2-2zM7 16l4 2M19 16l-4 2" fill="#f4511e"/></svg></button>
    <button class="active" aria-label="Microsoft Teams"><svg width="32" height="32"><circle cx="16" cy="5.500" r="5" fill="#7b83eb"/><circle cx="26" cy="7" r="3.500" fill="#5059c9"/><path d="M10 12h20v8q0 6-6 6H10z" fill="#5e68d8"/><path d="M0 7h16v15H0z" fill="#4b53bc"/><path d="M4.500 11.500h7M8 11.500v7.500" stroke="#fff" stroke-width="2"/></svg><span class="badge">4</span></button>
  </nav>
  <div class="tray">
    <span class="battery"><span>60%</span></span>
    <svg class="leaf" width="8" height="18"><path d="M5 0q4 8 2 12-1 3-3 3-4-1-4-5 0-4 5-10zM4 15v3" fill="#fff"/><path d="M4 14v4" stroke="#fff"/></svg>
    <button class="weather"><svg width="30" height="22" fill="none" stroke="#fff" stroke-width="1.800"><rect x="1" y="3" width="24" height="17" rx="2"/><path d="M5 1h22q2 0 2 2v14q0 3-4 3M5 7.500h16M5 11h7v5.500H5zM15 11.500h6M15 16h6"/></svg><span>30°C</span><span>Light rain</span></button>
    <button class="tray-icon" aria-label="Show hidden icons"><svg width="17" height="10"><path d="M1 9l7.500-7.500L16 9" fill="none" stroke="#fff" stroke-width="1.500"/></svg></button>
    <button class="tray-icon" aria-label="Microphone"><svg width="14" height="21"><rect x="2.500" y="0" width="9" height="16" rx="3" fill="#fff"/><path d="M.8 11q0 6.500 6.200 6.500t6.200-6.500M7 17v4M4 20.500h6" fill="none" stroke="#fff" stroke-width="1.200"/></svg></button>
    <button class="tray-icon" aria-label="Power"><svg width="20" height="16" fill="none" stroke="#fff" stroke-width="1.300"><path d="M8 3h9.500v10H5v-3M17.500 6H19v4h-1.500M1 2.500h5v3q-2.500 3-5 0zM2 0v2M5 0v2M3.500 7v3.500"/><path d="M8.500 5.500h5.500v5H8.500z" fill="#fff" stroke="none"/></svg></button>
    <button class="tray-icon" aria-label="Network"><svg width="17" height="17" fill="none" stroke="#ddd" stroke-width="1.300"><path d="M1 16Q1 1 16 1M5 16Q5 5 16 5M9 16q0-7 7-7M12.500 16q0-3.500 3.500-3.500"/><path d="M15 15.500h2" stroke-width="2"/></svg></button>
    <button class="tray-icon" aria-label="Volume"><svg width="21" height="16" fill="none" stroke="#eee" stroke-width="1.200"><path d="M1 5.500h3L9 1v14l-5-4.500H1zM11.500 5.500q2 2.500 0 5M14 3.500q4 4.500 0 9M17 1.500q6 6.500 0 13"/></svg></button>
    <button class="lang">ENG</button>
    <button class="clock"><time>13:33</time><time>15-09-2021</time></button>
    <button class="notify" aria-label="Notifications"><svg width="22" height="22"><path d="M0 0h20v17h-9l-5 5v-5H0z" fill="#fff"/><path d="M4 4.500h12M4 8.500h12M4 12.500h8" stroke="#222" stroke-width="1.300"/></svg><span class="count">1</span></button>
  </div>
</footer>
</body>
</html>
```
FILE: styles.css
```css
* { box-sizing: border-box; margin: 0; }
body {
  display: flex;
  flex-direction: column;
  min-height: 100vh;
  background: #1a1a1a;
  color: #fff;
  font: 16px/24px "Noto Sans", "Open Sans", sans-serif;
}
button {
  display: flex;
  align-items: center;
  justify-content: center;
  padding: 0;
  border: 0;
  background: none;
  color: inherit;
  font: inherit;
}
svg { flex: none; overflow: visible; }
.sprite { position: absolute; width: 0; height: 0; }
.arrow { width: 6px; height: 4px; color: #77787c; }
.arrow.dark { color: #222; }

/* Window title */
.titlebar {
  display: grid;
  grid-template-columns: 1fr auto 1fr;
  align-items: center;
  height: 49px;
  background: #0a0a0a;
  border-bottom: 1px solid #000;
}
.titlebar h1 { font-size: 16px; font-weight: 400; }
.window-buttons { display: flex; justify-content: flex-end; }
.window-buttons button { width: 50px; height: 46px; }

/* Call controls */
.callbar {
  display: flex;
  align-items: center;
  height: 75px;
  padding: 0 26px 0 41px;
  background: #1f1f1f;
}
.elapsed { flex: 1; font-size: 16px; }
.request {
  width: 179px;
  height: 40px;
  margin-right: 41px;
  border: 1px solid #5c5c5c;
  border-radius: 3px;
  background: #292929;
  font-size: 16px;
  font-weight: 600;
}
.call-group {
  display: flex;
  height: 40px;
  padding: 0 16px 0 15px;
  border-left: 1px solid #4d4d4d;
}
.call-group button { width: 60px; }
.leave {
  gap: 10px;
  width: 130px;
  height: 40px;
  border-radius: 3px;
  background: #c4314b;
  font-size: 16px;
  font-weight: 600;
}

/* Meeting area */
.meeting { display: flex; flex: 1; padding-bottom: 6px; }
.stage {
  position: relative;
  display: flex;
  flex: 1;
  min-width: 0;
  margin: 7px 0 0 6px;
  padding: 18px 0;
  background: #000;
}
.ppt { display: flex; flex: 1; flex-direction: column; min-width: 0; color: #3b3b3b; font-size: 13px; line-height: 18px; }
.ppt-head { background: linear-gradient(#f5c464, #fad994 45%, #fef1dc 80%, #fff8ee); border-bottom: 1px solid #b9bcc3; }
.ppt-title { display: grid; grid-template-columns: 1fr auto 1fr; height: 30px; }
.ppt-title h2 { align-self: center; color: #453b28; font: 400 17px/24px "Noto Sans", sans-serif; }
.qat { display: flex; align-items: center; gap: 8px; height: 26px; }
.qat > .vline { margin: 0 -3px; }
.vline { width: 1px; height: 20px; background: #b9b4ad; justify-self: center; }
.ppt-controls { display: flex; justify-content: flex-end; }
.ppt-controls button { width: 31px; height: 23px; }
.ppt-controls .ppt-close { width: 53px; margin-right: 2px; background: #d0574f; }
.tabs { display: flex; align-items: flex-end; height: 27px; color: #4f4a43; }
.tab { height: 27px; padding: 0 16px 2px; }
.tab.file { width: 64px; margin-right: 4px; border: 1px solid #c9431c; border-bottom: 0; border-radius: 0 3px 0 0; background: linear-gradient(#ec6233, #f4502a 50%, #f67a45); color: #fff; }
.tab.on { margin-bottom: -1px; padding: 0 14px 1px; border: 1px solid #b9bcc3; border-bottom: 0; border-radius: 4px 4px 0 0; background: #fff; }
.tabs-end { display: flex; gap: 10px; align-self: center; margin: 0 2px 0 auto; }

/* Ribbon */
.ribbon { display: flex; background: linear-gradient(#fff 55%, #e8ecf4); border-bottom: 2px solid #a3a6ad; }
.group { position: relative; flex: none; height: 101px; padding: 2px 0 0 8px; border-right: 1px solid #cdd0d8; }
.group h3 { margin: 0 22px 0 -8px; color: #6f7383; font-size: 13px; font-weight: 400; line-height: 20px; text-align: center; }
.clipboard { width: 176px; }
.slides { width: 145px; }
.font { width: 276px; padding-left: 7px; }
.paragraph { width: 361px; }
.drawing { width: 407px; }
.editing { width: 102px; }
.slides h3, .editing h3 { margin-right: 0; }
.launch { position: absolute; right: 6px; bottom: 5px; width: 9px; height: 9px; }
.body { display: flex; height: 78px; }
.off { color: #9c9ca0; }
.off .arrow { color: #b4b4b8; }
.stack button { justify-content: flex-start; gap: 5px; height: 26px; white-space: nowrap; }
.big { flex-direction: column; justify-content: flex-start; gap: 1px; width: 48px; padding-top: 4px; line-height: 15px; }
.big > svg:first-child { margin-bottom: 5px; }
.big > .arrow { margin-top: 4px; }
.big span { display: flex; align-items: center; gap: 3px; }
.paste { width: 38px; margin-right: 10px; }
.slides .big { margin: 0 4px 0 -2px; }
.rows { display: block; padding-top: 6px; }
.rows > div { display: grid; align-items: center; height: 33px; }
.rows button { gap: 4px; }
.font-row1 { grid-template-columns: 127px 46px 30px 22px 12px 28px; }
.font-row2 { grid-template-columns: 27px 27px 27px 32px 26px 35px 38px 12px 44px; }
.para-row1 { grid-template-columns: 38px 40px 9px 30px 24px 10px 34px; }
.para-row2 { grid-template-columns: 25px 28px 28px 27px 10px 38px; }
.paragraph .rows { margin-right: 7px; }
select {
  height: 25px;
  padding: 0 4px;
  appearance: none;
  border: 1px solid #dcdee6;
  border-radius: 0;
  background: #fbfbfd url("data:image/svg+xml,%3Csvg xmlns='http://www.w3.org/2000/svg' width='6' height='4'%3E%3Cpath d='M0 0h6L3 4z' fill='%23777'/%3E%3C/svg%3E") no-repeat right 5px center;
  color: #a5a5a8;
  font: inherit;
}
.serif { color: #858589; font-family: "Liberation Serif", serif; font-size: 17px; }
.serif s { font-size: 15px; font-weight: 700; }
.shadow { text-shadow: 2px 2px 2px #bbb; }
.rows .grow, .rows .shrink { align-items: flex-start; gap: 0; font-weight: 700; }
.grow { font-size: 19px; }
.shrink { font-size: 16px; }
.font-row2 .color { gap: 9px; font-size: 19px; }
.av svg:first-child { margin-top: 1px; }

.gallery { display: flex; width: 160px; height: 70px; margin: 4px 6px 0 -1px; border: 1px solid #c3c7d0; background: #fff; }
.gallery > svg { width: 142px; height: 69px; }
.gallery-scroll { display: grid; flex: 1; border-left: 1px solid #c3c7d0; }
.gallery-scroll button + button { border-top: 1px solid #c3c7d0; }
.quick { width: 50px; margin: 0 3px 0 4px; }
.editing .stack { padding-left: 3px; }

/* Slide pane */
.workspace { display: flex; flex: 1; background: linear-gradient(#d3d6df, #b9bcc1); border: solid #8f9299; border-width: 0 0 1px 2px; }
.slide {
  display: flex;
  flex: 1;
  align-items: flex-start;
  gap: 31px;
  min-width: 0;
  margin: 2px 198px 0 203px;
  padding: 47px;
  background: #54493e;
  box-shadow: 0 0 10px #77797e;
}
.sbox {
  flex: none;
  width: 807px;
  height: 561px;
  border: 2px solid #efe6e3;
  border-collapse: collapse;
  table-layout: fixed;
  background: #fffdfc;
  color: #4a4646;
  font: 16px/18px "Liberation Sans", sans-serif;
}
.sbox tr { height: 32px; }
.sbox td, .sbox th { padding: 0; border: 1px solid #6e6664; font-weight: 400; text-align: center; }
.sbox tbody tr:nth-child(odd) td:nth-child(even),
.sbox tbody tr:nth-child(even) td:nth-child(odd) { background: #fae3d0; color: #5f4739; }
.sbox tr :nth-child(1), .sbox tr :nth-child(5), .sbox tr :nth-child(13), .sbox tr :nth-child(14) { border-right: 2px solid #453f3d; }
.sbox tbody tr:nth-child(3n) > * { border-bottom: 2px solid #453f3d; }
.slide-title { padding-top: 169px; color: #fdf3e6; font: 39px/48px Lato, sans-serif; white-space: nowrap; }
.scrollbar { display: flex; flex-direction: column; width: 23px; padding: 1px 4px 18px 0; border-left: 1px solid #c9ccd4; background: linear-gradient(90deg, #d9dce5, #e1e5f0); }
.scrollbar button { width: 18px; height: 20px; }
.scrollbar .before { flex: 458; }
.scrollbar .after { flex: 88; }
.thumb { display: flex; align-items: center; justify-content: center; width: 17px; height: 20px; border: 1px solid #8a8d96; background: #f4f5f9; }
.scrollbar .prev { border-top: 1px solid #b3b6bf; }

.statusbar { display: flex; align-items: center; height: 32px; padding: 0 2px 0 0; border-top: 5px solid #f4f1ec; background: linear-gradient(#8f9299 2px, #e2e4ea 2px, #bcbfc8); color: #4b4b4f; }
.cell { display: flex; align-items: center; height: 24px; padding: 0 9px 0 10px; border-right: 1px solid #94979f; }
.cell.first { padding-left: 8px; }
.views { display: flex; align-items: center; height: 24px; margin-left: auto; padding-left: 5px; border-left: 1px solid #94979f; }
.views button { width: 22px; height: 22px; }
.views .on { border: 2px solid #e0a637; border-radius: 3px; background: #fbdc83; }
.percent { width: 44px; text-align: center; }
.zoom { width: 115px; height: 19px; margin: 0 -1px; appearance: none; background: linear-gradient(#8a8d96, #8a8d96) center / 100% 1px no-repeat, linear-gradient(#8a8d96, #8a8d96) center / 1px 9px no-repeat; }
.zoom::-webkit-slider-thumb { width: 11px; height: 15px; appearance: none; border: 1px solid #6c6f78; border-radius: 1px 1px 6px 6px; background: #f4f5f8; }
.views .fit { margin-left: 7px; }

.pointer { position: absolute; top: 366px; left: 1444px; }
.presenter { position: absolute; bottom: 10px; left: 10px; padding: 3px 9px; border-radius: 4px; background: rgba(25, 25, 25, .55); font-size: 14px; }

/* Participants */
.roster { display: flex; flex: 0 0 312px; flex-direction: column; background: radial-gradient(circle at 86px 74px, #2c2b3a, #1b1b1b 170px); }
.people { display: grid; grid-template-columns: 138px 138px; justify-content: center; padding: 29px 2px 0 0; list-style: none; }
.people li { display: flex; flex-direction: column; align-items: center; gap: 8px; height: 138px; }
.avatar { display: flex; align-items: center; justify-content: center; width: 88px; height: 88px; border-radius: 50%; font-size: 32px; font-weight: 500; }
.speaking .avatar { box-shadow: 0 0 0 3px #1f1f25, 0 0 0 6px #9ea2ff; }
.name { display: flex; align-items: center; gap: 12px; font-size: 14px; }
.name svg { width: 16px; height: 16px; }
.green { background: #cfe1d6; color: #1a4a2e; }
.slate { background: #d7e3ea; color: #254754; }
.moss { background: #dbe0d6; color: #3a4524; }
.aqua { background: #daf0f3; color: #2f6a6e; }
.lime { background: #e6eedd; color: #4c6034; }
.steel { background: #cfdae0; color: #15343e; }
.more { background: #404040; font-size: 15px; font-weight: 600; }
.self { display: flex; flex: 1; align-items: center; justify-content: center; margin: 15px 6px 0 5px; background: #1f1f1f; }
.violet { width: 70px; height: 70px; background: #d7d4e9; color: #2b2260; font-size: 26px; }

/* Taskbar */
.taskbar { display: flex; height: 50px; background: #212121; }
.start { width: 60px; }
.search { display: flex; align-items: center; gap: 12px; width: 429px; padding-left: 14px; border: 1px solid #5b5b5b; background: #333; }
.search input { flex: 1; min-width: 0; padding: 0; border: 0; background: none; color: #fff; font: 18px/24px "Noto Sans", sans-serif; }
.search input::placeholder { color: #dedede; opacity: 1; }
.apps { display: flex; }
.apps button { position: relative; width: 62px; }
.apps .active { border-bottom: 3px solid #b7b7b7; background: #4c4c4c; }
.badge { position: absolute; top: 26px; left: 30px; width: 17px; height: 17px; border-radius: 50%; background: #c4183c; font: 700 13px/17px "Noto Sans", sans-serif; }
.tray { display: flex; align-items: center; margin-left: auto; padding-right: 5px; }
.battery { position: relative; width: 62px; height: 25px; margin-right: 10px; border: 3px solid #fff; background: linear-gradient(90deg, #1a9a4b 60%, #000 60%); font-size: 16px; line-height: 19px; text-align: center; }
.battery::after { position: absolute; top: 4px; right: -6px; width: 2px; height: 11px; background: #fff; content: ""; }
.weather { gap: 11px; margin: 0 18px 0 82px; }
.tray-icon { width: 30px; height: 50px; }
.lang { width: 48px; font-size: 15px; }
.clock { flex-direction: column; width: 86px; height: 50px; font-size: 14px; line-height: 23px; }
.notify { position: relative; width: 64px; height: 50px; padding-right: 8px; border-right: 1px solid #555; }
.count { position: absolute; top: 25px; left: 28px; width: 20px; height: 20px; border: 1px solid #999; border-radius: 50%; background: #333; font-size: 13px; line-height: 18px; text-align: center; }
```
